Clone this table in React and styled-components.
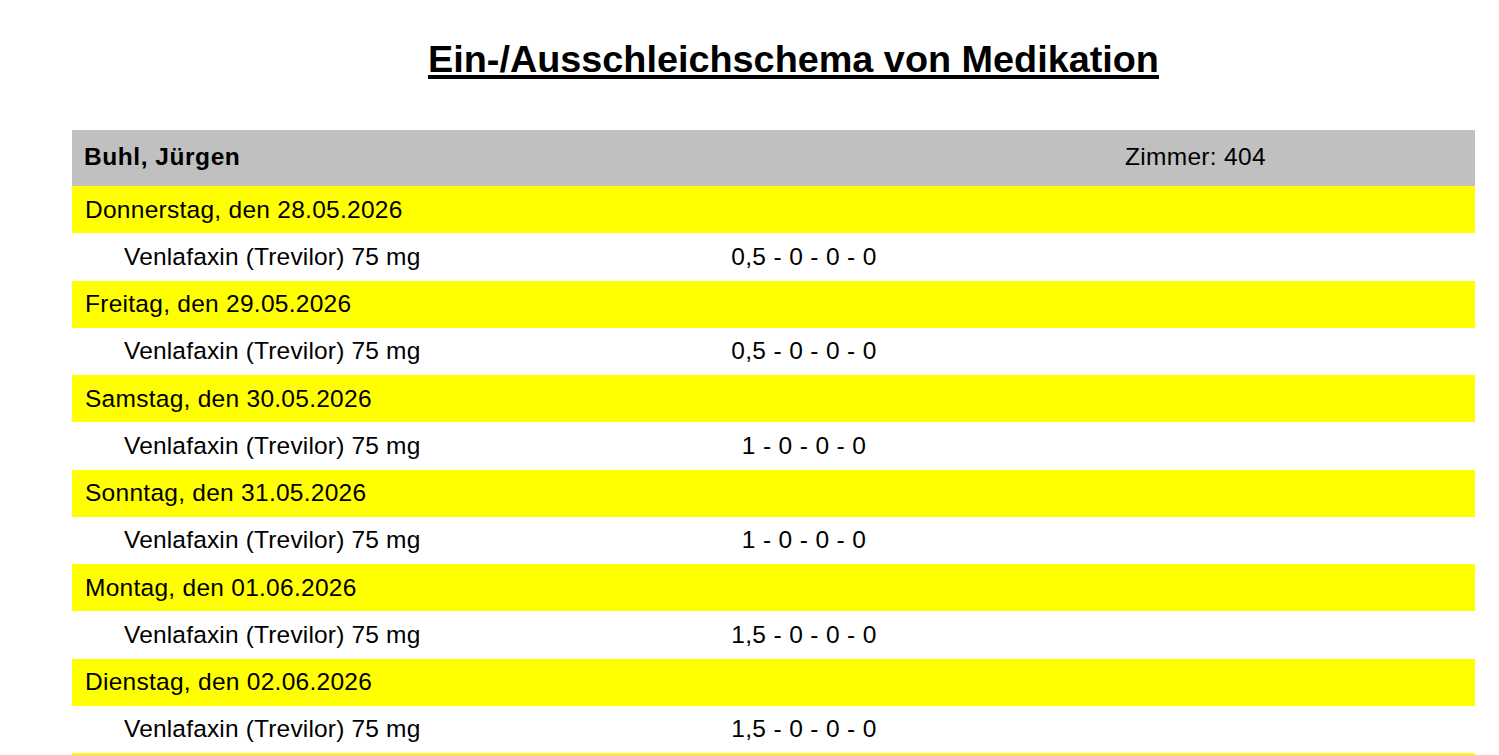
import React from "react";
import styled, { createGlobalStyle } from "styled-components";

const GlobalStyle = createGlobalStyle`
  html, body { margin: 0; padding: 0; background: #ffffff; }
  body { font-family: "Liberation Sans", Arial, sans-serif; color: #000; }
`;

const Page = styled.div`
  width: 1499px;
  height: 755px;
  overflow: hidden;
  padding-top: 37px;
  box-sizing: border-box;
`;

const Title = styled.h1`
  margin: 0;
  padding-left: 88px;
  text-align: center;
  font-size: 37.8px;
  line-height: 44px;
  font-weight: bold;
  text-decoration: underline;
  text-decoration-thickness: 3.5px;
  text-underline-offset: 3px;
`;

const Table = styled.div`
  margin: 49px 0 0 72px;
  width: 1403px;
  display: flex;
  flex-direction: column;
`;

const HeaderRow = styled.div`
  height: 56px;
  flex: none;
  background: #c0c0c0;
  display: grid;
  grid-template-columns: 1053px 1fr;
  align-items: center;
  font-size: 24.5px;
  padding-bottom: 3px;
  box-sizing: border-box;
`;

const Name = styled.div`
  padding-left: 12px;
  font-weight: bold;
  letter-spacing: 0.55px;
`;

const Room = styled.div`
  letter-spacing: 0.3px;
`;

const DayRow = styled.div`
  height: 47.25px;
  flex: none;
  background: #ffff00;
  display: flex;
  align-items: center;
  padding-left: 13px;
  font-size: 24.5px;
  letter-spacing: 0.27px;
`;

const MedRow = styled.div`
  height: 47.25px;
  flex: none;
  background: #ffffff;
  display: grid;
  grid-template-columns: 540px 384px 1fr;
  align-items: center;
  font-size: 24.5px;
`;

const MedName = styled.div`
  padding-left: 52px;
  letter-spacing: 0.17px;
`;

const Dose = styled.div`
  text-align: center;
  letter-spacing: 0.35px;
`;

const days = [
  { day: "Donnerstag, den 28.05.2026", dose: "0,5 - 0 - 0 - 0" },
  { day: "Freitag, den 29.05.2026", dose: "0,5 - 0 - 0 - 0" },
  { day: "Samstag, den 30.05.2026", dose: "1 - 0 - 0 - 0" },
  { day: "Sonntag, den 31.05.2026", dose: "1 - 0 - 0 - 0" },
  { day: "Montag, den 01.06.2026", dose: "1,5 - 0 - 0 - 0" },
  { day: "Dienstag, den 02.06.2026", dose: "1,5 - 0 - 0 - 0" },
  { day: "Mittwoch, den 03.06.2026", dose: "1,5 - 0 - 0 - 0" },
];

export default function App() {
  return (
    <>
      <GlobalStyle />
      <Page>
        <Title>Ein-/Ausschleichschema von Medikation</Title>
        <Table>
          <HeaderRow>
            <Name>Buhl, Jürgen</Name>
            <Room>Zimmer: 404</Room>
          </HeaderRow>
          {days.map((d) => (
            <React.Fragment key={d.day}>
              <DayRow>{d.day}</DayRow>
              <MedRow>
                <MedName>Venlafaxin (Trevilor) 75 mg</MedName>
                <Dose>{d.dose}</Dose>
                <div />
              </MedRow>
            </React.Fragment>
          ))}
        </Table>
      </Page>
    </>
  );
}
